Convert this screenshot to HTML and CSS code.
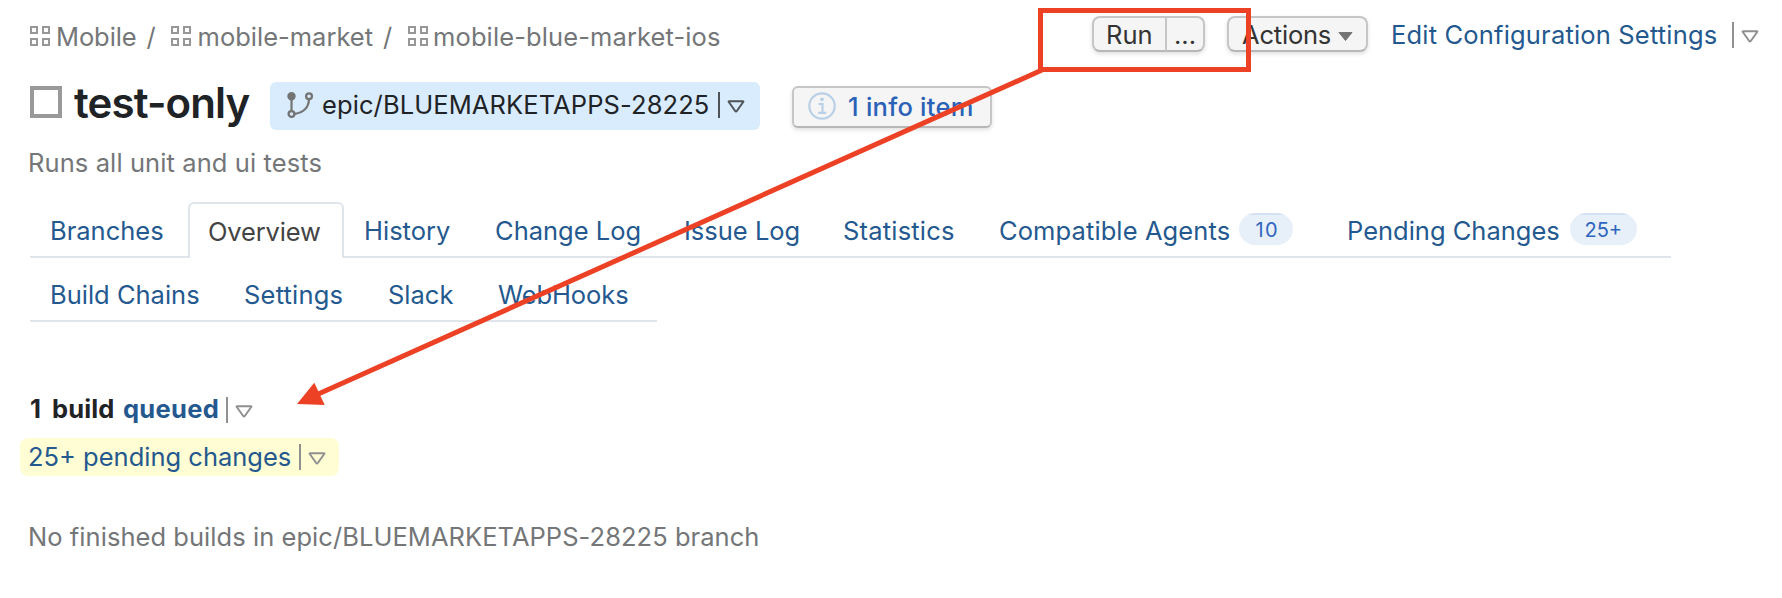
FILE: index.html
```html
<!DOCTYPE html>
<html lang="en">
<head>
<meta charset="utf-8">
<title>test-only</title>
<link rel="stylesheet" href="styles.css">
</head>
<body>
<svg class="defs" width="0" height="0">
  <symbol id="project" viewBox="0 0 20 20"><path d="M1 1h6v6H1zM13 1h6v6h-6zM1 13h6v6H1zM13 13h6v6h-6z" fill="none" stroke="#979797" stroke-width="2"/></symbol>
  <symbol id="caret" viewBox="0 0 18 13"><path d="M2.2 1.2h13.6q1 0 .4.8l-6.4 9q-.8 1-1.600 0l-6.400-9q-.6-.8.4-.8z" fill="none" stroke="currentColor" stroke-width="2" stroke-linejoin="round"/></symbol>
</svg>
<div class="page">
  <header class="header">
    <nav class="crumbs">
      <a class="crumb"><svg class="project"><use href="#project"/></svg><span>Mobile</span></a>
      <span class="slash">/</span>
      <a class="crumb crumb-mid"><svg class="project"><use href="#project"/></svg><span>mobile-market</span></a>
      <span class="slash">/</span>
      <a class="crumb crumb-last"><svg class="project"><use href="#project"/></svg><span>mobile-blue-market-ios</span></a>
    </nav>
    <div class="actions">
      <div class="btn split"><span class="run">Run</span><span class="more">...</span></div>
      <div class="btn menu"><span>Actions</span><svg width="15" height="9" viewBox="0 0 15 9"><path d="M1 .5h13L7.500 8.500z" fill="#747474" stroke="#747474" stroke-linejoin="round"/></svg></div>
      <a class="link edit">Edit Configuration Settings</a>
      <span class="drop"><svg><use href="#caret"/></svg></span>
    </div>
  </header>

  <div class="title-row">
    <span class="checkbox"></span>
    <h1 class="title">test-only</h1>
    <div class="branch">
      <svg class="branch-icon" viewBox="0 0 26 26" fill="none" stroke="#747474" stroke-width="2"><path d="M4.500 4v15M22 7.500C21.500 16 16 20.500 8 21.800" stroke-width="2.200"/><circle cx="4.500" cy="4.200" r="3.200" fill="#747474"/><circle cx="22" cy="4.200" r="2.900" stroke-width="2.300"/><circle cx="4.500" cy="22" r="2.900" stroke-width="2.300"/></svg>
      <span class="branch-name">epic/BLUEMARKETAPPS-28225</span>
      <span class="drop dark"><svg><use href="#caret"/></svg></span>
    </div>
    <div class="btn info">
      <svg width="28" height="28" viewBox="0 0 28 28" fill="none" stroke="#b9d0e6" stroke-width="2.200"><circle cx="14" cy="14" r="12.700"/><path d="M10.500 12h4v8.500M10 20.800h8.200"/><circle cx="14" cy="7.300" r="1.900" fill="#b9d0e6" stroke="none"/></svg>
      <span>1 info item</span>
    </div>
  </div>

  <p class="description">Runs all unit and ui tests</p>

  <nav class="tabs tabs-main">
    <a class="tab">Branches</a>
    <a class="tab active">Overview</a>
    <a class="tab">History</a>
    <a class="tab">Change Log</a>
    <a class="tab">Issue Log</a>
    <a class="tab wide">Statistics</a>
    <a class="tab agents"><span>Compatible Agents</span><span class="count ten">10</span></a>
    <a class="tab"><span>Pending Changes</span><span class="count">25+</span></a>
  </nav>
  <nav class="tabs tabs-more">
    <a class="tab">Build Chains</a>
    <a class="tab wide">Settings</a>
    <a class="tab slack">Slack</a>
    <a class="tab hooks">WebHooks</a>
  </nav>

  <main class="content">
    <div class="queue"><b class="number">1</b><b class="build">build</b><b class="queued">queued</b><span class="drop"><svg><use href="#caret"/></svg></span></div>
    <div class="pending"><a class="link">25+ pending changes</a><span class="drop"><svg><use href="#caret"/></svg></span></div>
    <p class="empty">No finished builds in epic/BLUEMARKETAPPS-28225 branch</p>
  </main>

  <svg class="annotation" width="1782" height="598" viewBox="0 0 1782 598">
    <rect x="1040.500" y="10.500" width="208" height="59" fill="none" stroke="#ed4126" stroke-width="5"/>
    <path d="M1042 70L316 395" stroke="#ed4126" stroke-width="5"/>
    <path d="M297 404L314.300 382.700L324.700 405z" fill="#ed4126"/>
  </svg>
</div>
</body>
</html>
```
FILE: styles.css
```css
* { box-sizing: border-box; }
body {
  margin: 0;
  background: #fff;
  font: 400 25.5px/32px Inter, "Liberation Sans", sans-serif;
  color: #1f2326;
  white-space: nowrap;
}
h1, p { margin: 0; }
svg { display: block; flex: none; }
.defs { position: absolute; }
.page { position: relative; width: 1782px; height: 598px; overflow: hidden; }
.header { display: flex; justify-content: space-between; height: 78px; padding: 16px 23px 0 30px; }
.crumbs { display: flex; align-items: flex-start; padding-top: 5px; color: #747678; }
.crumb { display: flex; align-items: center; gap: 6px; letter-spacing: -.1px; }
.crumb-mid { gap: 7px; letter-spacing: 0; }
.crumb-last { gap: 5px; letter-spacing: .11px; }
.project { width: 20px; height: 20px; margin-bottom: 2px; }
.slash { width: 34px; padding-left: 10px; }
.crumb-mid + .slash { width: 35px; padding-left: 10px; }
.actions { display: flex; align-items: flex-start; }
.btn {
  display: flex;
  align-items: center;
  height: 36px;
  border: 2px solid #c6c6c6;
  border-bottom-color: #b7b7b7;
  border-radius: 8px;
  background: #f5f5f5;
  color: #333;
  box-shadow: 0 2px 4px rgba(0, 0, 0, .13);
}
.split { width: 113px; margin-right: 22px; }
.run { width: 73px; padding: 1px 0 0 12px; border-right: 2px solid #c6c6c6; }
.more { padding: 1px 0 0 7px; }
.menu { width: 141px; padding: 1px 0 0 13px; gap: 7px; margin-right: 23px; letter-spacing: -.2px; }
.menu svg { margin-top: 4px; }
.link { color: #24598f; }
.edit { width: 341px; padding-top: 1px; letter-spacing: .18px; line-height: 36px; }
.drop {
  display: flex;
  align-items: center;
  height: 26px;
  padding-left: 7px;
  border-left: 2px solid #909090;
  color: #909090;
}
.drop svg { width: 18px; height: 13px; margin-top: 3px; }
.actions .drop { margin-top: 6px; }
.drop.dark { border-color: #4d5357; color: #4d5357; }
.title-row { display: flex; align-items: flex-start; height: 69px; padding: 4px 0 0 30px; }
.checkbox { width: 32px; height: 32px; margin-top: 4px; border: 4px solid #999; }
.title { width: 196px; margin-left: 12px; font-size: 42px; font-weight: 600; line-height: 41px; letter-spacing: -.88px; }
.branch { display: flex; align-items: center; width: 490px; height: 48px; padding: 0 15px 2px 17px; border-radius: 6px; background: #d8ecfd; }
.branch-icon { width: 26px; height: 26px; }
.branch-name { width: 396px; margin-left: 9px; letter-spacing: .1px; }
.info { width: 200px; height: 42px; margin: 4px 0 0 32px; padding: 0 0 1px 14px; gap: 12px; border-radius: 6px; color: #2a62b8; font-weight: 500; letter-spacing: .25px; }
.info svg { margin-bottom: 1px; }
.description { height: 55px; padding-left: 28px; letter-spacing: .1px; color: #747678; }
.tabs { display: grid; margin-left: 30px; color: #24598f; }
.tabs-main { grid-template-columns: 158px 156px 131px 189px 159px 156px 348px 344px; height: 56px; }
.tabs-more { grid-template-columns: 194px 143px 111px 179px; height: 64px; padding-top: 8px; }
.tab { display: flex; align-items: center; padding: 3px 0 0 20px; border-bottom: 2px solid #dfe5eb; }
.active { padding: 1px 0 0 18px; letter-spacing: -.15px; border: 2px solid #dfe5eb; border-bottom: 0; border-radius: 6px 6px 0 0; color: #444; }
.wide { letter-spacing: .2px; }
.agents { letter-spacing: .1px; }
.slack { padding-left: 21px; }
.hooks { letter-spacing: -.1px; }
.count {
  display: flex;
  justify-content: center;
  align-items: center;
  width: 67px;
  height: 32px;
  margin: 0 0 3px 10px;
  border-radius: 16px;
  background: linear-gradient(#d5e1f2 2px, #e7eff8 2px);
  color: #2e65bf;
  font-size: 20px;
}
.count { padding-top: 2px; }
.ten { width: 54px; margin-left: 9px; letter-spacing: 1.3px; padding-left: 2px; }
.content { padding-top: 71px; }
.queue { display: flex; align-items: center; height: 45px; padding: 0 0 13px 30px; font-weight: 650; }
.queue b { font-weight: inherit; }
.number { width: 22px; }
.build { width: 71px; letter-spacing: .1px; }
.queued { width: 103px; letter-spacing: .3px; color: #24598f; }
.queue .drop { margin-top: 1px; }
.pending { display: flex; align-items: center; width: 319px; height: 38px; margin-left: 20px; padding-left: 9px; border-radius: 8px; background: #fffdd3; }
.pending .link { width: 270px; margin-left: -1px; margin-right: 1px; }
.empty { padding: 45px 0 0 28px; letter-spacing: .05px; color: #747678; }
.annotation { position: absolute; inset: 0; }
```
